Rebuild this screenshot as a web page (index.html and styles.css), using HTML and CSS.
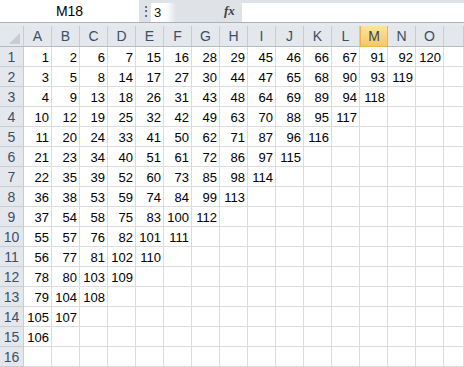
FILE: index.html
```html
<!DOCTYPE html>
<html lang="en">
<head>
  <meta charset="UTF-8">
  <meta name="viewport" content="width=device-width, initial-scale=1.0">
  <title>Sheet1</title>
  <link rel="stylesheet" href="styles.css">
</head>
<body>
  <div class="formula-bar">
    <div class="name-box">M18</div>
    <div class="grip">&#8942;</div>
    <div class="edit-cell">3</div>
    <div class="fx">fx</div>
    <div class="formula-input"></div>
  </div>
  <div class="gap"></div>
  <div class="sheet" id="sheet"></div>

  <script>
    const cols = "ABCDEFGHIJKLMNO".split("");
    const data = [
      [1, 2, 6, 7, 15, 16, 28, 29, 45, 46, 66, 67, 91, 92, 120],
      [3, 5, 8, 14, 17, 27, 30, 44, 47, 65, 68, 90, 93, 119],
      [4, 9, 13, 18, 26, 31, 43, 48, 64, 69, 89, 94, 118],
      [10, 12, 19, 25, 32, 42, 49, 63, 70, 88, 95, 117],
      [11, 20, 24, 33, 41, 50, 62, 71, 87, 96, 116],
      [21, 23, 34, 40, 51, 61, 72, 86, 97, 115],
      [22, 35, 39, 52, 60, 73, 85, 98, 114],
      [36, 38, 53, 59, 74, 84, 99, 113],
      [37, 54, 58, 75, 83, 100, 112],
      [55, 57, 76, 82, 101, 111],
      [56, 77, 81, 102, 110],
      [78, 80, 103, 109],
      [79, 104, 108],
      [105, 107],
      [106],
      []
    ];

    const sheet = document.getElementById("sheet");
    let html = '<div class="corner"></div>';
    cols.forEach(c => {
      html += `<div class="col-head${c === "M" ? " active" : ""}">${c}</div>`;
    });
    html += '<div class="col-head blank"></div>';

    data.forEach((row, i) => {
      html += `<div class="row-head">${i + 1}</div>`;
      for (let j = 0; j < cols.length; j++) {
        html += `<div class="cell">${row[j] !== undefined ? row[j] : ""}</div>`;
      }
      html += '<div class="cell"></div>';
    });
    sheet.innerHTML = html;
  </script>
</body>
</html>
```

FILE: styles.css
```css
body {
  margin: 0;
  overflow: hidden;
  background: #fff;
  font-family: "Liberation Sans", Arial, sans-serif;
}
.formula-bar {
  display: flex;
  height: 22px;
  background: #dfe3e8;
  border-bottom: 1px solid #a9b0b8;
}
.name-box {
  width: 139px;
  background: #fff;
  font-size: 14px;
  line-height: 23px;
  text-align: center;
}
.grip {
  width: 12px;
  font-size: 12px;
  line-height: 22px;
  color: #333;
  padding-left: 1px;
  box-sizing: border-box;
}
.edit-cell {
  width: 22px;
  margin-top: 3px;
  padding-left: 3px;
  font-size: 13px;
  line-height: 20px;
  color: #111;
  background: linear-gradient(to right, #fff 60%, #dfe3e8);
}
.fx {
  margin-left: auto;
  width: 18px;
  font-family: "Liberation Serif", serif;
  font-style: italic;
  font-weight: bold;
  font-size: 13px;
  line-height: 22px;
  color: #404040;
}
.formula-input {
  width: 222px;
  margin-top: 3px;
  background: #fff;
}
.gap {
  height: 3px;
  background: #e6e9ed;
}
.sheet {
  display: grid;
  grid-template-columns: 24px repeat(15, 28px) 1fr;
  grid-template-rows: 21px;
  grid-auto-rows: 20px;
}
.corner,
.col-head,
.row-head {
  box-sizing: border-box;
  background: #e4e7eb;
  border-right: 1px solid #c9cdd3;
  border-bottom: 1px solid #c9cdd3;
  color: #3b5068;
  font-size: 14px;
}
.corner {
  position: relative;
  border-bottom-color: #b5bac1;
}
.corner::after {
  content: "";
  position: absolute;
  right: 3px;
  bottom: 2px;
  width: 11px;
  height: 11px;
  background: #c7ccd2;
  clip-path: polygon(100% 0, 100% 100%, 0 100%);
}
.col-head {
  text-align: center;
  line-height: 21px;
  border-bottom-color: #b5bac1;
}
.col-head.active {
  background: linear-gradient(#fbe39d, #f4c866);
  border: 1px solid #f0b340;
  border-top: none;
  color: #444;
}
.row-head {
  text-align: center;
  line-height: 21px;
}
.cell {
  box-sizing: border-box;
  border-right: 1px solid #dadcdd;
  border-bottom: 1px solid #dadcdd;
  text-align: right;
  padding-right: 2px;
  font-size: 13px;
  line-height: 21px;
  color: #000;
}
```
